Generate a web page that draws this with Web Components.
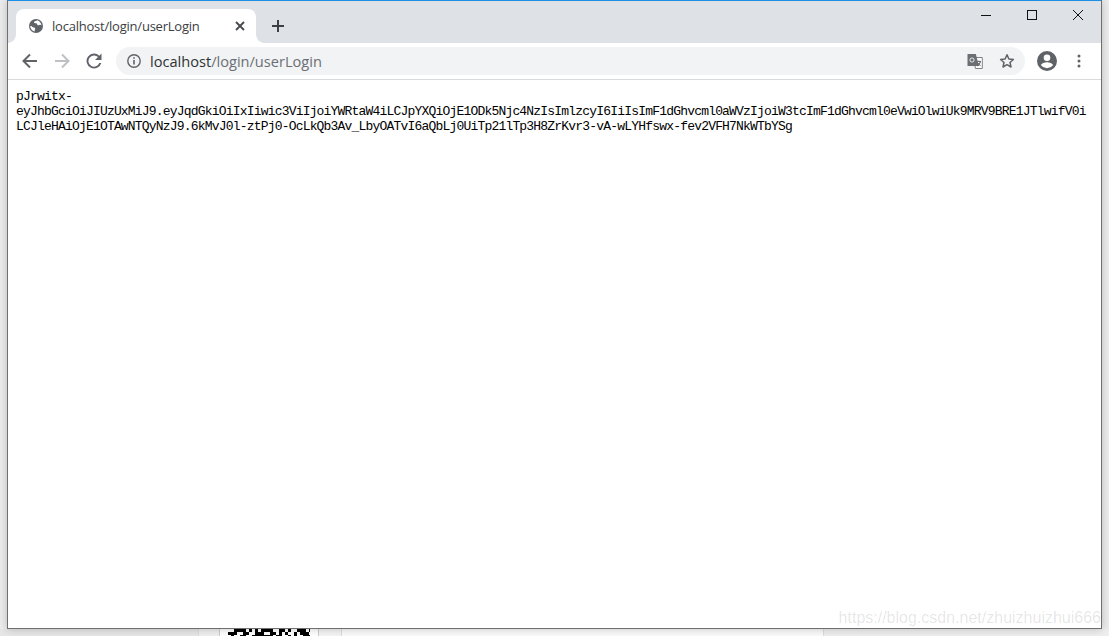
<!DOCTYPE html>
<html>
<head>
<meta charset="utf-8">
<title>localhost/login/userLogin</title>
<style>
  html, body { margin: 0; height: 100%; }
  body { overflow: hidden; background: #ececec; font-family: "Open Sans", "Liberation Sans", sans-serif; }
</style>
</head>
<body>
<desktop-backdrop>
  <browser-window>
    <browser-tabs slot="tabs" title-text="localhost/login/userLogin"></browser-tabs>
    <browser-toolbar slot="toolbar" host-text="localhost" path-text="/login/userLogin"></browser-toolbar>
    <token-page>pJrwitx-eyJhbGciOiJIUzUxMiJ9.eyJqdGkiOiIxIiwic3ViIjoiYWRtaW4iLCJpYXQiOjE1ODk5Njc4NzIsImlzcyI6IiIsImF1dGhvcml0aWVzIjoiW3tcImF1dGhvcml0eVwiOlwiUk9MRV9BRE1JTlwifV0iLCJleHAiOjE1OTAwNTQyNzJ9.6kMvJ0l-ztPj0-OcLkQb3Av_LbyOATvI6aQbLj0UiTp21lTp3H8ZrKvr3-vA-wLYHfswx-fev2VFH7NkWTbYSg</token-page>
  </browser-window>
</desktop-backdrop>

<script>
class DesktopBackdrop extends HTMLElement {
    constructor() {
        super();
        this.attachShadow({ mode: 'open' });

        // the qr code of the page behind the window, only its top edge shows
        let cells = '';
        let seed = 7;
        for (let y = 0; y < 3; y++) {
            for (let x = 0; x < 28; x++) {
                seed = (seed * 75 + 74) % 65537;
                if (seed % 5 < 3) cells += `<rect x="${x * 3}" y="${y * 3}" width="3" height="3"/>`;
            }
        }

        // stripes along the bottom are the page showing behind the window
        this.shadowRoot.innerHTML = `
            <style>
                :host { display: flex; flex-direction: column; height: 636px; padding: 0 7px 0 7px; box-sizing: border-box; }
                ::slotted(*) { flex: 0 0 629px; }
                .behind { flex: 1; display: flex; margin: 0 -7px; background: #f1f1f1; }
                .a { width: 198px; background: #e6e6e6; }
                .b { width: 21px; background: #efefef; border-left: 1px solid #ddd; box-sizing: border-box; }
                .c { width: 100px; background: #fff; border-left: 1px solid #ccc; border-right: 1px solid #ccc; box-sizing: border-box; display: flex; justify-content: center; }
                .c svg { display: block; }
                .d { width: 22px; background: #f4f4f4; }
                .e { width: 482px; background: #fafafa; border-left: 1px solid #ddd; box-sizing: border-box; }
                .f { flex: 1; background: #eee; border-left: 1px solid #ddd; }
            </style>
            <slot></slot>
            <div class="behind">
                <div class="a"></div><div class="b"></div>
                <div class="c"><svg width="82" height="7" viewBox="0 0 82 7">${cells}</svg></div>
                <div class="d"></div><div class="e"></div><div class="f"></div>
            </div>
        `;
    }
}

class BrowserWindow extends HTMLElement {
    constructor() {
        super();
        this.attachShadow({ mode: 'open' });
        this.shadowRoot.innerHTML = `
            <style>
                :host {
                    display: flex; flex-direction: column; box-sizing: border-box;
                    background: #fff; border: 1px solid #6f6f6f; border-top: 1px solid #1a8fe3;
                    box-shadow: 0 0 8px rgba(0,0,0,.22);
                    position: relative; z-index: 1;
                }
            </style>
            <slot name="tabs"></slot>
            <slot name="toolbar"></slot>
            <slot></slot>
        `;
    }
}

class BrowserTabs extends HTMLElement {
    constructor() {
        super();
        this.attachShadow({ mode: 'open' });
        const title = this.getAttribute('title-text') || '';
        this.shadowRoot.innerHTML = `
            <style>
                :host { display: flex; height: 42px; background: #dee1e6; align-items: flex-end; color: #3c4043; }
                .tab {
                    position: relative; display: flex; align-items: center; box-sizing: border-box;
                    width: 240px; height: 34px; margin-left: 8px; padding: 0 8px 0 12px;
                    background: #fff; border-radius: 8px 8px 0 0;
                }
                .tab::before, .tab::after {
                    content: ''; position: absolute; bottom: 0; width: 8px; height: 8px;
                    background: radial-gradient(circle at 0 0, #dee1e6 7.5px, #fff 8px);
                }
                .tab::before { left: -8px; }
                .tab::after { right: -8px; background: radial-gradient(circle at 100% 0, #dee1e6 7.5px, #fff 8px); }
                .title { flex: 1; margin-left: 8px; font-size: 13px; white-space: nowrap; letter-spacing: -.22px; color: #3c4043; }
                svg { display: block; flex: none; }
                .new { margin-left: 14px; margin-bottom: 9px; }
                .spacer { flex: 1; }
                .caption { display: flex; align-self: flex-start; }
                .caption div { width: 46px; height: 28px; display: flex; align-items: center; justify-content: center; }
            </style>
            <div class="tab">
                <svg width="16" height="16" viewBox="0 0 16 16"><circle cx="8" cy="8" r="7" fill="#5f6368"/><path fill="#fff" d="M9.200 2.200c-.9.700-2.300.8-3 1.600-.6.700.3 1.600 1.200 1.500 1-.1 1.800.3 1.800 1.100 0 1 1.300.9 2.300.5.900-.3 1.600.1 2 .6-.2-2.500-1.900-4.700-4.300-5.300zM2.200 8.300c.2 2.500 1.900 4.600 4.300 5.300.4-.8.100-1.700.6-2.500.4-.7-.2-1.400-1-1.500-1.100-.1-1.800-.8-2.400-1.300-.4-.3-1-.3-1.500 0z"/></svg>
                <span class="title">${title}</span>
                <svg width="16" height="16" viewBox="0 0 16 16"><path stroke="#45484c" stroke-width="1.800" d="M4 4l8 8M12 4l-8 8"/></svg>
            </div>
            <svg class="new" width="16" height="16" viewBox="0 0 16 16"><path stroke="#3c4043" stroke-width="2" d="M8 2v12M2 8h12"/></svg>
            <div class="spacer"></div>
            <div class="caption">
                <div><svg width="12" height="12" viewBox="0 0 12 12"><path stroke="#111" d="M1 6.500h10"/></svg></div>
                <div><svg width="12" height="12" viewBox="0 0 12 12"><rect x="1.500" y="1.500" width="9" height="9" fill="none" stroke="#111"/></svg></div>
                <div><svg width="12" height="12" viewBox="0 0 12 12"><path stroke="#111" d="M1 1l10 10M11 1L1 11"/></svg></div>
            </div>
        `;
    }
}

class BrowserToolbar extends HTMLElement {
    constructor() {
        super();
        this.attachShadow({ mode: 'open' });
        const host = this.getAttribute('host-text') || '';
        const path = this.getAttribute('path-text') || '';
        this.shadowRoot.innerHTML = `
            <style>
                :host { display: flex; align-items: center; height: 36px; background: #fff; border-bottom: 1px solid #d9dadc; padding: 0 0 0 13px; }
                svg { display: block; flex: none; }
                .nav { display: flex; gap: 14px; }
                .omni {
                    flex: 1; display: flex; align-items: center; height: 28px; margin-left: 13px; padding: 0 10px;
                    background: #f1f3f4; border-radius: 14px; font-size: 14.6px;
                }
                .host { margin-left: 8px; color: #2f3235; }
                .path { color: #6b6f74; flex: 1; }
                .omni .right { display: flex; gap: 16px; align-items: center; }
                .side { display: flex; align-items: center; margin-left: 12px; margin-right: 20px; gap: 20px; }
            </style>
            <div class="nav">
                <svg width="18" height="18" viewBox="0 0 18 18"><path fill="none" stroke="#5f6368" stroke-width="2" d="M16 9H3M9 2.500L2.500 9 9 15.500"/></svg>
                <svg width="18" height="18" viewBox="0 0 18 18"><path fill="none" stroke="#bdc1c6" stroke-width="2" d="M2 9h13M9 2.500L15.500 9 9 15.500"/></svg>
                <svg width="18" height="18" viewBox="0 0 18 18"><path fill="#5f6368" d="M14.300 3.700A7.500 7.500 0 1 0 16.300 11h-2a5.600 5.600 0 1 1-1.300-5.900L10 8h6.500V1.500z"/></svg>
            </div>
            <div class="omni">
                <svg width="16" height="16" viewBox="0 0 16 16"><circle cx="8" cy="8" r="6.200" fill="none" stroke="#5f6368" stroke-width="1.400"/><path stroke="#5f6368" stroke-width="1.600" d="M8 7v4.500M8 4.200v1.600"/></svg>
                <span class="host">${host}</span><span class="path">${path}</span>
                <div class="right">
                    <svg width="16" height="17" viewBox="0 0 16 17"><path fill="#fff" stroke="#7d8185" d="M6.500 4.500h8.800v11H8.500z"/><path fill="#6b6f73" d="M.5 1h8.300l3.200 12H.5z"/><circle cx="5" cy="7" r="2.100" fill="none" stroke="#e8eaed" stroke-width="1"/><path stroke="#6b6f73" d="M10 8.500h4M12 7.500v1M13.500 8.500c-.4 2-1.800 3.500-3 4.300M10.800 9.800c.6 1.200 1.600 2.200 2.800 2.900"/></svg>
                    <svg width="16" height="16" viewBox="0 0 16 16"><path fill="none" stroke="#5f6368" stroke-width="1.500" stroke-linejoin="round" d="M8 1.800l1.900 4.200 4.500.5-3.400 3 1 4.500L8 11.700 4 14l1-4.500-3.400-3 4.500-.5z"/></svg>
                </div>
            </div>
            <div class="side">
                <svg width="20" height="20" viewBox="0 0 20 20"><path fill="#5f6368" d="M10 0a10 10 0 1 0 0 20 10 10 0 0 0 0-20zm0 3.500a3.300 3.300 0 1 1 0 6.600 3.300 3.300 0 0 1 0-6.600zM10 17.200a7.600 7.600 0 0 1-6-3c.1-2 4-3 6-3s5.900 1 6 3a7.600 7.600 0 0 1-6 3z"/></svg>
                <svg width="4" height="14" viewBox="0 0 4 14"><g fill="#5f6368"><circle cx="2" cy="2" r="1.500"/><circle cx="2" cy="7" r="1.500"/><circle cx="2" cy="12" r="1.500"/></g></svg>
            </div>
        `;
    }
}

class TokenPage extends HTMLElement {
    constructor() {
        super();
        this.attachShadow({ mode: 'open' });
        this.shadowRoot.innerHTML = `
            <style>
                :host { display: block; flex: 1; position: relative; padding: 9px 12px 0 8px; background: #fff; color: #000; }
                .text { font: 13px/15px "Liberation Mono", "Noto Sans CJK SC", monospace; letter-spacing: -.81px; overflow-wrap: anywhere; }
                .mark { position: absolute; right: 0; bottom: 1px; font: 16px "Liberation Sans", sans-serif; color: rgba(0,0,0,.11); }
            </style>
            <div class="text"><slot></slot></div>
            <div class="mark">https://blog.csdn.net/zhuizhuizhui666</div>
        `;
    }
}

customElements.define('desktop-backdrop', DesktopBackdrop);
customElements.define('browser-window', BrowserWindow);
customElements.define('browser-tabs', BrowserTabs);
customElements.define('browser-toolbar', BrowserToolbar);
customElements.define('token-page', TokenPage);
</script>
</body>
</html>
